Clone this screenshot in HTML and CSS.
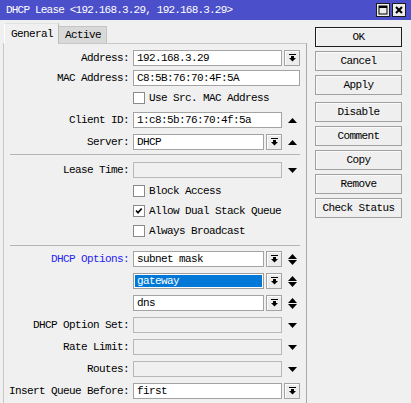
FILE: index.html
```html
<!DOCTYPE html>
<html>
<head>
<meta charset="utf-8">
<title>DHCP Lease</title>
<link rel="stylesheet" href="styles.css">
</head>
<body>
<svg width="0" height="0" class="defs">
  <defs>
    <symbol id="i-drop" viewBox="0 0 7 8"><rect x="0" y="0" width="7" height="1"/><rect x="2" y="2" width="3" height="2"/><polygon points="0,4 7,4 3.5,7.5"/></symbol>
    <symbol id="i-up" viewBox="0 0 9 5"><polygon points="0,5 9,5 4.5,0"/></symbol>
    <symbol id="i-down" viewBox="0 0 9 5"><polygon points="0,0 9,0 4.5,5"/></symbol>
  </defs>
</svg>
<div class="window">
  <div class="titlebar">
    <span class="title">DHCP Lease &lt;192.168.3.29, 192.168.3.29&gt;</span>
    <div class="winbtns">
      <span class="winbtn"><svg width="10" height="10" viewBox="0 0 10 10"><rect x="1" y="1" width="8" height="8" fill="none" stroke="#000" stroke-width="1"/><rect x="1" y="1" width="8" height="2" fill="#000"/></svg></span>
      <span class="winbtn"><svg width="10" height="10" viewBox="0 0 10 10"><path d="M2 2 L8 8 M8 2 L2 8" stroke="#000" stroke-width="2"/></svg></span>
    </div>
  </div>

  <div class="body">
    <div class="left">
      <div class="tabs">
        <span class="tab tab-on">General</span>
        <span class="tab tab-off">Active</span>
      </div>
      <div class="panel">
        <div class="row r-first">
          <label class="lbl">Address:</label>
          <div class="field">
            <span class="input grow">192.168.3.29</span>
            <span class="ddbtn"><svg class="ico-drop"><use href="#i-drop"/></svg></span>
          </div>
        </div>
        <div class="row r4">
          <label class="lbl">MAC Address:</label>
          <div class="field"><span class="input grow">C8:5B:76:70:4F:5A</span></div>
        </div>
        <div class="row r4">
          <span class="lbl"></span>
          <div class="field"><span class="cb"></span><span class="cbtext">Use Src. MAC Address</span></div>
        </div>
        <div class="row r6">
          <label class="lbl">Client ID:</label>
          <div class="field">
            <span class="input grow">1:c8:5b:76:70:4f:5a</span>
            <span class="tail"><svg class="tri"><use href="#i-up"/></svg></span>
          </div>
        </div>
        <div class="row r6">
          <label class="lbl">Server:</label>
          <div class="field">
            <span class="input grow">DHCP</span>
            <span class="ddbtn"><svg class="ico-drop"><use href="#i-drop"/></svg></span>
            <span class="tail"><svg class="tri"><use href="#i-up"/></svg></span>
          </div>
        </div>

        <div class="sep sep-a"></div>

        <div class="row r7">
          <label class="lbl">Lease Time:</label>
          <div class="field">
            <span class="input off grow"></span>
            <span class="tail"><svg class="tri"><use href="#i-down"/></svg></span>
          </div>
        </div>
        <div class="row r5">
          <span class="lbl"></span>
          <div class="field"><span class="cb"></span><span class="cbtext">Block Access</span></div>
        </div>
        <div class="row r4">
          <span class="lbl"></span>
          <div class="field"><span class="cb"><svg width="12" height="12" viewBox="0 0 12 12"><polyline points="2.5,5.5 4.8,8.2 9.2,3" fill="none" stroke="#000" stroke-width="2"/></svg></span><span class="cbtext">Allow Dual Stack Queue</span></div>
        </div>
        <div class="row r4">
          <span class="lbl"></span>
          <div class="field"><span class="cb"></span><span class="cbtext">Always Broadcast</span></div>
        </div>

        <div class="sep sep-b"></div>

        <div class="row r5">
          <label class="lbl lbl-blue">DHCP Options:</label>
          <div class="field">
            <span class="input grow">subnet mask</span>
            <span class="ddbtn"><svg class="ico-drop"><use href="#i-drop"/></svg></span>
            <span class="tail updown"><svg class="tri"><use href="#i-up"/></svg><svg class="tri"><use href="#i-down"/></svg></span>
          </div>
        </div>
        <div class="row r6">
          <span class="lbl"></span>
          <div class="field">
            <span class="input sel grow">gateway</span>
            <span class="ddbtn"><svg class="ico-drop"><use href="#i-drop"/></svg></span>
            <span class="tail updown"><svg class="tri"><use href="#i-up"/></svg><svg class="tri"><use href="#i-down"/></svg></span>
          </div>
        </div>
        <div class="row r6">
          <span class="lbl"></span>
          <div class="field">
            <span class="input grow">dns</span>
            <span class="ddbtn"><svg class="ico-drop"><use href="#i-drop"/></svg></span>
            <span class="tail updown"><svg class="tri"><use href="#i-up"/></svg><svg class="tri"><use href="#i-down"/></svg></span>
          </div>
        </div>
        <div class="row r6">
          <label class="lbl">DHCP Option Set:</label>
          <div class="field">
            <span class="input off grow"></span>
            <span class="tail"><svg class="tri"><use href="#i-down"/></svg></span>
          </div>
        </div>
        <div class="row r6">
          <label class="lbl">Rate Limit:</label>
          <div class="field">
            <span class="input off grow"></span>
            <span class="tail"><svg class="tri"><use href="#i-down"/></svg></span>
          </div>
        </div>
        <div class="row r6">
          <label class="lbl">Routes:</label>
          <div class="field">
            <span class="input off grow"></span>
            <span class="tail"><svg class="tri"><use href="#i-down"/></svg></span>
          </div>
        </div>
        <div class="row r6">
          <label class="lbl">Insert Queue Before:</label>
          <div class="field">
            <span class="input grow">first</span>
            <span class="ddbtn"><svg class="ico-drop"><use href="#i-drop"/></svg></span>
          </div>
        </div>
      </div>
    </div>

    <div class="actions">
      <button class="btn btn-default">OK</button>
      <button class="btn">Cancel</button>
      <button class="btn">Apply</button>
      <button class="btn btn-group">Disable</button>
      <button class="btn">Comment</button>
      <button class="btn">Copy</button>
      <button class="btn">Remove</button>
      <button class="btn">Check Status</button>
    </div>
  </div>
</div>
</body>
</html>
```

FILE: styles.css
```css
html, body {
  margin: 0;
  padding: 0;
  background: #f0f0f0;
  overflow: hidden;
}

.defs {
  position: absolute;
  width: 0;
  height: 0;
}

.window {
  font-family: "Liberation Mono", "DejaVu Sans Mono", monospace;
  font-size: 11px;
  letter-spacing: -0.6px;
  color: #000;
  height: 403px;
  overflow: hidden;
}

/* title bar */
.titlebar {
  height: 20px;
  background: #4b4fc9;
  display: flex;
  align-items: center;
  justify-content: space-between;
  padding-left: 6px;
  padding-right: 5px;
}

.title {
  color: #fff;
  letter-spacing: -0.8px;
  white-space: pre;
}

.winbtns {
  display: flex;
  gap: 2px;
}

.winbtn {
  width: 14px;
  height: 14px;
  box-sizing: border-box;
  border: 1px solid #1a1a1a;
  background: #ececec;
  display: flex;
  align-items: center;
  justify-content: center;
}

/* main area */
.body {
  display: flex;
  gap: 8px;
  padding: 3px 0 0 3px;
}

.left {
  width: 304px;
  display: flex;
  flex-direction: column;
}

.tabs {
  display: flex;
  align-items: flex-end;
  padding-left: 1px;
  height: 20px;
  position: relative;
  z-index: 1;
}

.tab {
  box-sizing: border-box;
  border: 1px solid #c4c4c4;
  border-bottom: none;
  padding: 0 6px;
  display: flex;
  align-items: center;
}

.tab-on {
  height: 21px;
  margin-bottom: -1px;
  background: #f0f0f0;
  border-color: #e2e2e2 #bcbcbc #bcbcbc #ffffff;
  width: 55px;
}

.tab-off {
  height: 17px;
  background: #d9d9d9;
  border-left: none;
  width: 48px;
}

.panel {
  border: 1px solid #c8c8c8;
  border-right-color: #a8a8a8;
  padding: 6px 6px 12px 0;
  display: flex;
  flex-direction: column;
  height: 400px;
  box-sizing: border-box;
}

.row {
  display: flex;
  align-items: center;
  height: 16px;
}

.r4 { margin-top: 4px; }
.r5 { margin-top: 5px; }
.r6 { margin-top: 6px; }
.r7 { margin-top: 7px; }

.lbl {
  width: 125px;
  margin-right: 4px;
  text-align: right;
  white-space: pre;
  flex: none;
}

.lbl-blue {
  color: #2424f0;
}

.field {
  width: 167px;
  height: 16px;
  display: flex;
  align-items: center;
  gap: 2px;
}

.input {
  height: 16px;
  box-sizing: border-box;
  border: 1px solid #a3a3a3;
  background: #fff;
  padding-left: 3px;
  line-height: 14px;
  white-space: pre;
  overflow: hidden;
}

.grow {
  flex: 1;
}

.input.off {
  background: #f0f0f0;
  border-color: #b8b8b8;
}

.input.sel {
  background: #0078d7;
  color: #fff;
  box-shadow: inset 0 0 0 1px #fff;
  border-color: #9c9c9c;
  padding-left: 3px;
}

.ddbtn {
  width: 16px;
  height: 16px;
  box-sizing: border-box;
  border: 1px solid #a3a3a3;
  background: #ececec;
  box-shadow: inset 1px 1px 0 #fff;
  display: flex;
  align-items: center;
  justify-content: center;
  flex: none;
}

.ico-drop {
  width: 7px;
  height: 8px;
  fill: #000;
}

.tail {
  width: 16px;
  height: 16px;
  display: flex;
  flex-direction: column;
  align-items: center;
  justify-content: center;
  flex: none;
}

.tri {
  width: 9px;
  height: 5px;
  fill: #000;
}

.updown {
  gap: 1px;
}

.cb {
  width: 12px;
  height: 12px;
  box-sizing: border-box;
  border: 1px solid #8a8a8a;
  background: #fff;
  display: flex;
  align-items: center;
  justify-content: center;
  flex: none;
}

.cb svg {
  width: 10px;
  height: 10px;
}

.cbtext {
  margin-left: 2px;
  white-space: pre;
}

.sep {
  height: 1px;
  background: #b4b4b4;
  margin-left: 6px;
  flex: none;
}

.sep-a { margin-top: 4px; }
.sep-b { margin-top: 6px; }

/* action buttons */
.actions {
  width: 87px;
  display: flex;
  flex-direction: column;
  gap: 4px;
  margin-top: 4px;
}

.btn {
  height: 20px;
  box-sizing: border-box;
  border: 1px solid #a0a0a0;
  background: #efefef;
  box-shadow: inset 1px 1px 0 #fafafa;
  font: inherit;
  letter-spacing: inherit;
  color: #000;
  padding: 0;
  margin: 0;
  white-space: pre;
}

.btn-default {
  border-color: #1e1e1e;
}

.btn-group {
  margin-top: 3px;
}
```
